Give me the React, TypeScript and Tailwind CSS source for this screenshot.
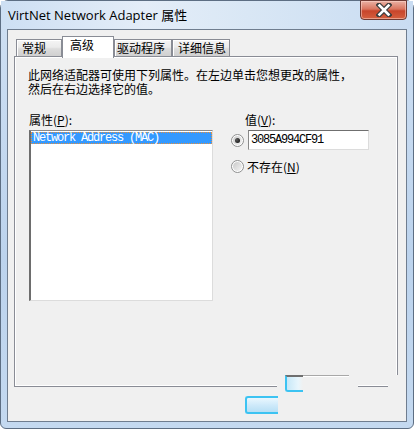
import type { ReactNode } from "react";

const cjk = "font-['Noto_Sans_CJK_SC','Noto_Sans',sans-serif]";
const mono = "font-['Liberation_Mono','DejaVu_Sans_Mono',monospace]";

function Tab({ children, selected, w, pl }: { children: ReactNode; selected?: boolean; w: string; pl: string }) {
  if (selected) {
    return (
      <div className={`relative z-10 -mb-[2px] flex h-[22px] ${w} ${pl} items-start border border-b-0 border-[#898c95] bg-white pt-[2px] text-[12px] leading-[12px] text-black`}>
        {children}
      </div>
    );
  }
  return (
    <div className={`flex h-[17px] ${w} ${pl} items-center border border-b-0 border-[#898c95] bg-[linear-gradient(to_bottom,#f5f5f5,#ebebeb_45%,#dcdcdc_55%,#d0d0d0)] text-[12px] leading-[12px] text-black shadow-[inset_1px_1px_0_#ffffff]`}>
      {children}
    </div>
  );
}

function Radio({ checked }: { checked?: boolean }) {
  return (
    <span className="flex h-[13px] w-[13px] shrink-0 items-center justify-center rounded-full border border-[#8e8f8f] bg-white">
      <span className="flex h-[9px] w-[9px] items-center justify-center rounded-full bg-[linear-gradient(135deg,#c9c9c9,#f4f4f4)]">
        {checked && <span className="h-[5px] w-[5px] rounded-full bg-[radial-gradient(circle_at_35%_35%,#5a5a5a,#0a0a0a)]" />}
      </span>
    </span>
  );
}

export default function App() {
  return (
    <div className={`h-[430px] w-[414px] overflow-hidden bg-white ${cjk}`}>
      <div className="flex h-[429px] w-[414px] flex-col rounded-t-[8px] rounded-b-[6px] border border-[#5d6e83] bg-[linear-gradient(to_bottom,#cfe0f3,#bcd3ed_60%,#c4d9f0)]">
        {/* title bar */}
        <div className="relative flex h-[28px] items-center bg-[linear-gradient(90deg,#cddff3,#e4edf8_35%,#d9e7f5_60%,#c9dcf2)] pl-[7px]">
          <span className="text-[13px] leading-[16px] text-black font-['Open_Sans','Noto_Sans_CJK_SC',sans-serif]">
            VirtNet Network Adapter 属性
          </span>
          <div className="absolute -top-px right-[6px] flex h-[20px] w-[47px] items-center justify-center rounded-b-[4px] border border-[#6e3a33] bg-[linear-gradient(to_bottom,#eab2a5,#d9755f_45%,#c8452b_55%,#d5603f)] shadow-[inset_0_0_0_1px_rgba(255,220,210,0.5)]">
            <svg width="16" height="14" viewBox="0 0 16 14">
              <path d="M3 2 L13 12 M13 2 L3 12" stroke="#3d3d3d" strokeWidth="5" strokeLinecap="square" />
              <path d="M3.5 2.5 L12.5 11.5 M12.5 2.5 L3.5 11.5" stroke="#ffffff" strokeWidth="2.6" strokeLinecap="square" />
            </svg>
          </div>
        </div>

        {/* client area */}
        <div className="relative mx-[6px] flex-1 border border-[#6f7d8f] bg-[#f0f0f0] pl-[6px] pr-[8px] pt-[6px]">
          <div className="flex h-[20px] items-end pl-[2px]">
            <Tab w="w-[46px]" pl="pl-[5px]">常规</Tab>
            <Tab selected w="w-[52px]" pl="pl-[7px]">高级</Tab>
            <Tab w="w-[58px]" pl="pl-[2px]">驱动程序</Tab>
            <Tab w="w-[58px]" pl="pl-[5px]">详细信息</Tab>
          </div>

          <div className="h-[331px] border border-[#898c95] bg-[#f0f0f0] shadow-[inset_1px_1px_0_#ffffff,inset_-1px_-1px_0_#ffffff]">
            <p className="pl-[13px] pt-[11px] text-[12px] leading-[14px] text-black whitespace-nowrap">
              此网络适配器可使用下列属性。在左边单击您想更改的属性，
              <br />
              然后在右边选择它的值。
            </p>

            <div className="mt-[17px] flex pl-[14px]">
              <div className="w-[184px]">
                <div className="text-[12px] leading-[13px] text-black">
                  属性(<span className="underline">P</span>):
                </div>
                <div className="mt-[4px] h-[171px] border-l-2 border-t border-r border-b border-l-[#6d6d6d] border-t-[#8a8a8a] border-r-[#dcdcdc] border-b-[#dcdcdc] bg-white pt-px">
                  <div className={`flex h-[12px] items-center border border-dotted border-[#e8903c] bg-[#3399ff] pl-px text-[12px] leading-[11px] tracking-[-1.2px] text-white ${mono}`}>
                    Network Address (MAC)
                  </div>
                </div>
              </div>

              <div className="ml-[18px]">
                <div className="pl-[14px] text-[12px] leading-[13px] text-black">
                  值(<span className="underline">V</span>):
                </div>
                <div className="mt-[4px] flex h-[20px] items-center gap-[4px]">
                  <Radio checked />
                  <div className={`flex h-[20px] w-[121px] items-center border border-t-[#6f6f6f] border-l-[#8a8a8a] border-r-[#dcdcdc] border-b-[#dcdcdc] bg-white pl-[2px] text-[12px] tracking-[-1.2px] text-black ${mono}`}>
                    3085A994CF91
                  </div>
                </div>
                <div className="mt-[9px] flex h-[14px] items-center gap-[3px]">
                  <Radio />
                  <span className="text-[12px] leading-[13px] text-black">
                    不存在(<span className="underline">N</span>)
                  </span>
                </div>
              </div>
            </div>
          </div>

          {/* redraw glitches over the bottom of the page */}
          <div className="absolute left-[269px] top-[346px] h-[16px] w-[81px] bg-[#f0f0f0]" />
          <div className="absolute left-[380px] top-[345px] h-[17px] w-[14px] bg-[#f0f0f0]" />
          <div className="absolute left-[295px] top-[345px] h-[2px] w-[46px] border-t border-[#a8a8a8] bg-white" />
          <div className="absolute left-[277px] top-[345px] h-[17px] w-[18px] rounded-bl-[3px] border-l-2 border-t-2 border-b-2 border-l-[#3cc3f2] border-b-[#3cc3f2] border-t-[#6f6f6f] bg-[linear-gradient(90deg,#c7e8f8,#e8f6fd_70%,#f0f0f0)]" />
          <div className="absolute left-[237px] top-[366px] h-[18px] w-[33px] rounded-l-[3px] border-l-2 border-t-2 border-b-2 border-[#3cc3f2] bg-[linear-gradient(to_bottom,#eaf7fe,#cfeafa_50%,#b7dff5)]" />
        </div>

        <div className="h-[6px]" />
      </div>
    </div>
  );
}
